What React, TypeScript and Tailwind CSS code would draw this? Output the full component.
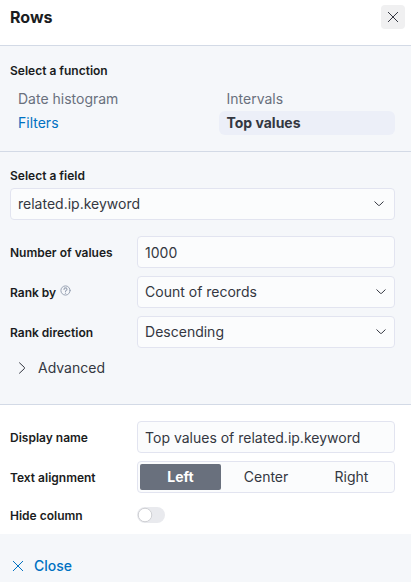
import { useState, type ReactNode } from "react";

const labelClass = "text-xs leading-4 font-semibold text-[#1a1c21]";
const fieldClass =
  "h-8 w-full appearance-none rounded border border-[#e2e4f0] bg-[#fbfcfd] px-[7px] text-sm text-[#343741] outline-none focus:border-[#0071c2]";

function Chevron() {
  return (
    <svg width="10" height="6" viewBox="0 0 10 6" fill="none" stroke="#343741" strokeWidth="1" strokeLinecap="round" strokeLinejoin="round">
      <path d="M.8.8 4.3 4.2q.7.6 1.4 0L9.2.8" />
    </svg>
  );
}

function Cross() {
  return (
    <svg width="12" height="12" viewBox="0 0 12 12" fill="none" stroke="currentColor" strokeWidth="1" strokeLinecap="round">
      <path d="m1.3 1.3 9.4 9.4M10.7 1.3 1.3 10.7" />
    </svg>
  );
}

function SelectField({ id, options, iconClass }: { id: string; options: string[]; iconClass: string }) {
  return (
    <div className="relative">
      <select id={id} className={fieldClass}>
        {options.map((o) => (
          <option key={o}>{o}</option>
        ))}
      </select>
      <span className={`pointer-events-none absolute inset-y-0 flex items-center ${iconClass}`}>
        <Chevron />
      </span>
    </div>
  );
}

function Row({ id, label, hint, children }: { id: string; label: string; hint?: ReactNode; children: ReactNode }) {
  return (
    <div className="grid grid-cols-[1fr_67%] items-center">
      <div className="flex gap-1 pt-[2px]">
        <label id={`${id}-label`} htmlFor={id} className={labelClass}>
          {label}
        </label>
        {hint}
      </div>
      {children}
    </div>
  );
}

function HelpIcon() {
  return (
    <svg width="11" height="11" viewBox="0 0 11 11" fill="none" stroke="#98a2b3" strokeLinecap="round">
      <circle cx="5.5" cy="5.5" r="4.6" strokeWidth="1" />
      <path d="M4 4.4c0-2 3-2 3 0 0 1-1.5 1-1.5 2" strokeWidth="1.1" />
      <path d="M5.5 8v.2" strokeWidth="1.2" />
    </svg>
  );
}

export default function App() {
  const [align, setAlign] = useState("Left");
  const fn = "h-6 rounded-md px-2 text-left text-sm";

  return (
    <div className="bg-[#f5f7fa] font-['Inter',sans-serif] text-sm text-[#343741]">
      <header className="flex h-[46px] items-start justify-between border-b border-[#d3dae6] bg-white pt-[5px] pr-[6px] pl-[10px]">
        <h1 className="text-base leading-6 font-bold text-[#1a1c21]">Rows</h1>
        <button type="button" aria-label="Close panel" className="flex size-6 items-center justify-center rounded bg-[#f0f0f1] text-[#343741]">
          <Cross />
        </button>
      </header>

      <section className="border-b border-[#d3dae6] pt-[17px] pr-4 pb-4 pl-[10px]">
        <h2 className={labelClass}>Select a function</h2>
        <div className="mt-2 grid grid-cols-2 gap-x-8">
          <button type="button" className={`${fn} text-[#69707d]`}>Date histogram</button>
          <button type="button" className={`${fn} text-[#69707d]`}>Intervals</button>
          <button type="button" className={`${fn} text-[#0071c2]`}>Filters</button>
          <button type="button" className={`${fn} bg-[#eceff8] font-bold`}>Top values</button>
        </div>
      </section>

      <section className="flex flex-col border-b border-[#d3dae6] pt-4 pr-4 pb-6 pl-[10px]">
        <label htmlFor="field" className={`mb-1 ${labelClass}`}>Select a field</label>
        <SelectField id="field" options={["related.ip.keyword"]} iconClass="right-[11px]" />
        <div className="mt-4 flex flex-col gap-2">
          <Row id="count" label="Number of values">
            <input id="count" defaultValue="1000" className={fieldClass} />
          </Row>
          <Row id="rank" label="Rank by" hint={<HelpIcon />}>
            <SelectField id="rank" options={["Count of records", "Alphabetical"]} iconClass="right-[9px]" />
          </Row>
          <Row id="direction" label="Rank direction">
            <SelectField id="direction" options={["Descending", "Ascending"]} iconClass="right-[9px]" />
          </Row>
        </div>
        <button type="button" className="mt-2 flex h-6 items-center gap-3 self-start pl-2">
          <svg width="8" height="12" viewBox="0 0 8 12" fill="none" stroke="#343741" strokeWidth="1" strokeLinecap="round" strokeLinejoin="round">
            <path d="m1.5.8 4.8 4.5q.6.7 0 1.4l-4.8 4.5" />
          </svg>
          Advanced
        </button>
      </section>

      <section className="flex flex-col gap-2 bg-white pt-4 pr-4 pb-[5px] pl-[10px]">
        <Row id="name" label="Display name">
          <input id="name" defaultValue="Top values of related.ip.keyword" className={fieldClass} />
        </Row>
        <Row id="align" label="Text alignment">
          <div role="radiogroup" aria-labelledby="align-label" className="grid h-8 grid-cols-[9fr_10fr_9fr] rounded border border-[#e2e4f0] bg-[#fbfcfd] p-[2px]">
            {["Left", "Center", "Right"].map((a) => (
              <label key={a} className="flex items-center justify-center rounded-xs has-checked:bg-[#69707d] has-checked:font-bold has-checked:text-white">
                <input
                  type="radio"
                  name="align"
                  id={a === "Left" ? "align" : undefined}
                  checked={align === a}
                  onChange={() => setAlign(a)}
                  className="sr-only"
                />
                {a}
              </label>
            ))}
          </div>
        </Row>
        <div className="flex h-7 flex-col justify-center">
          <Row id="hide" label="Hide column">
            <input
              id="hide"
              type="checkbox"
              role="switch"
              className="h-4 w-7 appearance-none rounded-full bg-[#e9eaee] before:block before:size-4 before:scale-90 before:rounded-full before:border before:border-[#c9cbcf] before:bg-white checked:bg-[#0071c2] checked:before:translate-x-3"
            />
          </Row>
        </div>
      </section>

      <footer className="flex h-12 items-end pb-1 pl-3">
        <button type="button" className="flex h-6 items-center gap-[10px] font-medium text-[#0071c2]">
          <Cross />
          Close
        </button>
      </footer>
    </div>
  );
}
